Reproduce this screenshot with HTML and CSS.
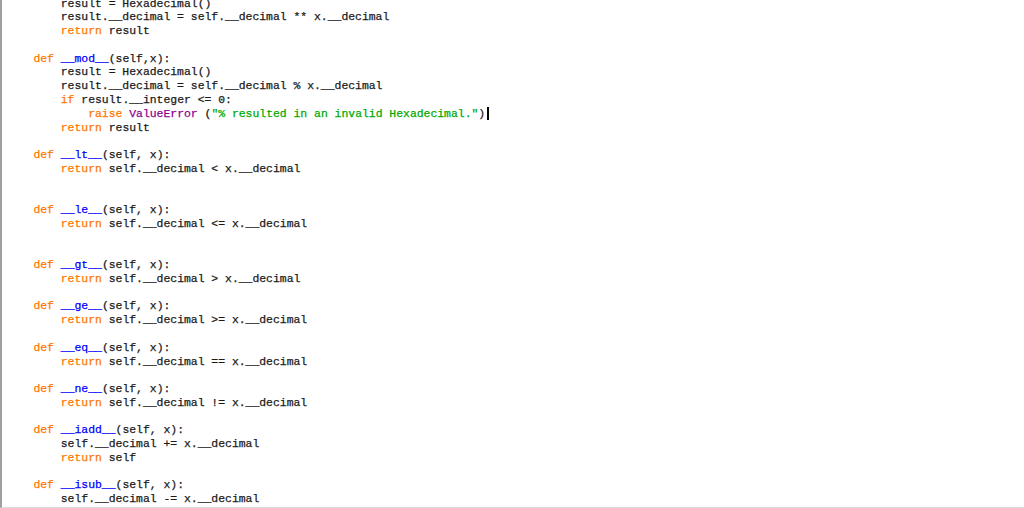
FILE: index.html
```html
<!DOCTYPE html>
<html>
<head>
<meta charset="utf-8">
<link rel="stylesheet" href="styles.css">
</head>
<body>
<div class="editor">
<pre class="code">        result = Hexadecimal()
        result.__decimal = self.__decimal ** x.__decimal
        <span class="kw">return</span> result

    <span class="kw">def</span> <span class="fn">__mod__</span>(self,x):
        result = Hexadecimal()
        result.__decimal = self.__decimal % x.__decimal
        <span class="kw">if</span> result.__integer &lt;= 0:
            <span class="kw">raise</span> <span class="bi">ValueError</span> (<span class="str">"% resulted in an invalid Hexadecimal."</span>)<span class="cursor"></span>
        <span class="kw">return</span> result

    <span class="kw">def</span> <span class="fn">__lt__</span>(self, x):
        <span class="kw">return</span> self.__decimal &lt; x.__decimal


    <span class="kw">def</span> <span class="fn">__le__</span>(self, x):
        <span class="kw">return</span> self.__decimal &lt;= x.__decimal


    <span class="kw">def</span> <span class="fn">__gt__</span>(self, x):
        <span class="kw">return</span> self.__decimal &gt; x.__decimal

    <span class="kw">def</span> <span class="fn">__ge__</span>(self, x):
        <span class="kw">return</span> self.__decimal &gt;= x.__decimal

    <span class="kw">def</span> <span class="fn">__eq__</span>(self, x):
        <span class="kw">return</span> self.__decimal == x.__decimal

    <span class="kw">def</span> <span class="fn">__ne__</span>(self, x):
        <span class="kw">return</span> self.__decimal != x.__decimal

    <span class="kw">def</span> <span class="fn">__iadd__</span>(self, x):
        self.__decimal += x.__decimal
        <span class="kw">return</span> self

    <span class="kw">def</span> <span class="fn">__isub__</span>(self, x):
        self.__decimal -= x.__decimal
</pre>
</div>
</body>
</html>
```

FILE: styles.css
```css
html, body {
  margin: 0;
  padding: 0;
  background: #ffffff;
  overflow: hidden;
}

.editor {
  width: 1024px;
  height: 508px;
  box-sizing: border-box;
  border-left: 2px solid #a0a0a0;
  border-bottom: 1px solid #dadada;
  overflow: hidden;
  background: #ffffff;
}

.code {
  margin: -3.4px 0 0 0;
  padding-left: 4px;
  font-family: "Liberation Mono", "Courier New", monospace;
  font-size: 11.42px;
  line-height: 13.77px;
  color: #1a1a1a;
  white-space: pre;
  -webkit-text-stroke: 0.25px currentColor;
}

.kw { color: #ff7700; }
.fn { color: #0000ff; }
.bi { color: #900090; }
.str { color: #00aa00; }

.cursor {
  display: inline-block;
  width: 2px;
  height: 13px;
  margin-left: 2px;
  background: #000000;
  vertical-align: -3px;
}
```
